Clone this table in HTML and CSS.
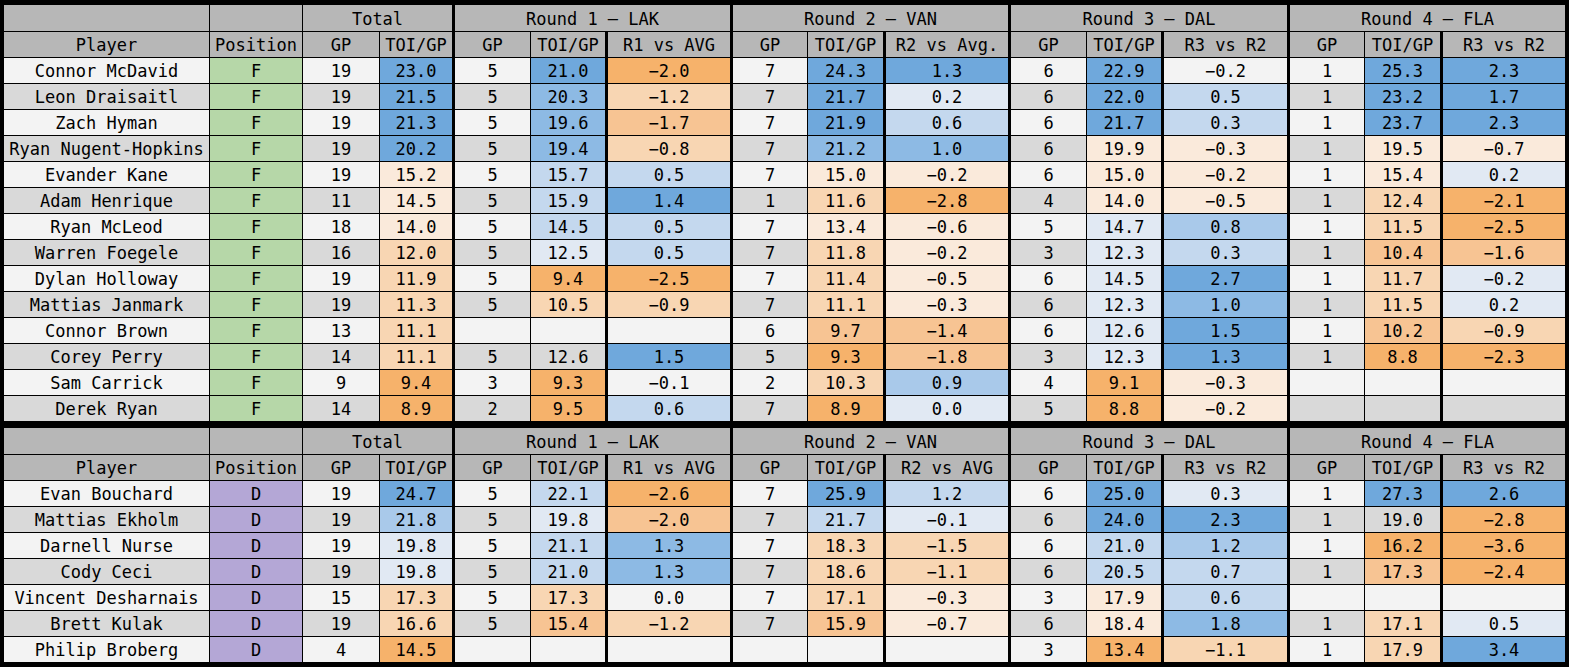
FILE: index.html
```html
<!DOCTYPE html>
<html>
<head>
<meta charset="utf-8">
<title>Oilers TOI by round</title>
<link rel="stylesheet" href="styles.css">
</head>
<body>
<div class="sheet">
  <section class="block fwd">
    <div class="row head1"><div></div><div></div><div class="s2 gr">Total</div><div class="s3 gr">Round 1 – LAK</div><div class="s3 gr">Round 2 – VAN</div><div class="s3 gr">Round 3 – DAL</div><div class="s3">Round 4 – FLA</div></div>
    <div class="row head2"><div>Player</div><div>Position</div><div>GP</div><div>TOI/GP</div><div>GP</div><div>TOI/GP</div><div>R1 vs AVG</div><div>GP</div><div>TOI/GP</div><div>R2 vs Avg.</div><div>GP</div><div>TOI/GP</div><div>R3 vs R2</div><div>GP</div><div>TOI/GP</div><div>R3 vs R2</div></div>
    <div class="row dr"><div>Connor McDavid</div><div class="pf">F</div><div>19</div><div class="b4">23.0</div><div>5</div><div class="b4">21.0</div><div class="o3">−2.0</div><div>7</div><div class="b4">24.3</div><div class="b4">1.3</div><div>6</div><div class="b4">22.9</div><div>−0.2</div><div>1</div><div class="b4">25.3</div><div class="b4">2.3</div></div>
    <div class="row dr"><div>Leon Draisaitl</div><div class="pf">F</div><div>19</div><div class="b4">21.5</div><div>5</div><div class="b3">20.3</div><div class="o1">−1.2</div><div>7</div><div class="b4">21.7</div><div class="b0">0.2</div><div>6</div><div class="b4">22.0</div><div class="b1">0.5</div><div>1</div><div class="b4">23.2</div><div class="b4">1.7</div></div>
    <div class="row dr"><div>Zach Hyman</div><div class="pf">F</div><div>19</div><div class="b4">21.3</div><div>5</div><div class="b3">19.6</div><div class="o2">−1.7</div><div>7</div><div class="b4">21.9</div><div class="b1">0.6</div><div>6</div><div class="b4">21.7</div><div class="b1">0.3</div><div>1</div><div class="b4">23.7</div><div class="b4">2.3</div></div>
    <div class="row dr"><div>Ryan Nugent-Hopkins</div><div class="pf">F</div><div>19</div><div class="b4">20.2</div><div>5</div><div class="b3">19.4</div><div class="o1">−0.8</div><div>7</div><div class="b3">21.2</div><div class="b3">1.0</div><div>6</div><div class="o0">19.9</div><div class="o0">−0.3</div><div>1</div><div class="o0">19.5</div><div class="o0">−0.7</div></div>
    <div class="row dr"><div>Evander Kane</div><div class="pf">F</div><div>19</div><div class="o0">15.2</div><div>5</div><div class="b1">15.7</div><div class="b1">0.5</div><div>7</div><div class="o0">15.0</div><div class="o0">−0.2</div><div>6</div><div class="o0">15.0</div><div class="o0">−0.2</div><div>1</div><div class="o0">15.4</div><div class="b0">0.2</div></div>
    <div class="row dr"><div>Adam Henrique</div><div class="pf">F</div><div>11</div><div class="o0">14.5</div><div>5</div><div class="b1">15.9</div><div class="b4">1.4</div><div>1</div><div class="o1">11.6</div><div class="o3">−2.8</div><div>4</div><div class="o0">14.0</div><div class="o0">−0.5</div><div>1</div><div class="o1">12.4</div><div class="o3">−2.1</div></div>
    <div class="row dr"><div>Ryan McLeod</div><div class="pf">F</div><div>18</div><div class="o0">14.0</div><div>5</div><div class="b1">14.5</div><div class="b1">0.5</div><div>7</div><div class="o0">13.4</div><div class="o0">−0.6</div><div>5</div><div class="b0">14.7</div><div class="b2">0.8</div><div>1</div><div class="o1">11.5</div><div class="o3">−2.5</div></div>
    <div class="row dr"><div>Warren Foegele</div><div class="pf">F</div><div>16</div><div class="o1">12.0</div><div>5</div><div class="b0">12.5</div><div class="b1">0.5</div><div>7</div><div class="o1">11.8</div><div class="o0">−0.2</div><div>3</div><div class="b0">12.3</div><div class="b1">0.3</div><div>1</div><div class="o2">10.4</div><div class="o2">−1.6</div></div>
    <div class="row dr"><div>Dylan Holloway</div><div class="pf">F</div><div>19</div><div class="o1">11.9</div><div>5</div><div class="o3">9.4</div><div class="o3">−2.5</div><div>7</div><div class="o1">11.4</div><div class="o0">−0.5</div><div>6</div><div class="b0">14.5</div><div class="b4">2.7</div><div>1</div><div class="o1">11.7</div><div class="b0">−0.2</div></div>
    <div class="row dr"><div>Mattias Janmark</div><div class="pf">F</div><div>19</div><div class="o1">11.3</div><div>5</div><div class="o1">10.5</div><div class="o1">−0.9</div><div>7</div><div class="o1">11.1</div><div class="o0">−0.3</div><div>6</div><div class="b0">12.3</div><div class="b3">1.0</div><div>1</div><div class="o1">11.5</div><div class="b0">0.2</div></div>
    <div class="row dr"><div>Connor Brown</div><div class="pf">F</div><div>13</div><div class="o1">11.1</div><div></div><div></div><div></div><div>6</div><div class="o2">9.7</div><div class="o2">−1.4</div><div>6</div><div class="b0">12.6</div><div class="b4">1.5</div><div>1</div><div class="o2">10.2</div><div class="o1">−0.9</div></div>
    <div class="row dr"><div>Corey Perry</div><div class="pf">F</div><div>14</div><div class="o1">11.1</div><div>5</div><div>12.6</div><div class="b4">1.5</div><div>5</div><div class="o3">9.3</div><div class="o2">−1.8</div><div>3</div><div class="b0">12.3</div><div class="b4">1.3</div><div>1</div><div class="o3">8.8</div><div class="o3">−2.3</div></div>
    <div class="row dr"><div>Sam Carrick</div><div class="pf">F</div><div>9</div><div class="o3">9.4</div><div>3</div><div class="o3">9.3</div><div>−0.1</div><div>2</div><div class="o1">10.3</div><div class="b2">0.9</div><div>4</div><div class="o3">9.1</div><div class="o0">−0.3</div><div></div><div></div><div></div></div>
    <div class="row dr"><div>Derek Ryan</div><div class="pf">F</div><div>14</div><div class="o3">8.9</div><div>2</div><div class="o3">9.5</div><div class="b1">0.6</div><div>7</div><div class="o3">8.9</div><div class="b0">0.0</div><div>5</div><div class="o3">8.8</div><div class="o0">−0.2</div><div></div><div></div><div></div></div>
  </section>
  <section class="block def">
    <div class="row head1"><div></div><div></div><div class="s2 gr">Total</div><div class="s3 gr">Round 1 – LAK</div><div class="s3 gr">Round 2 – VAN</div><div class="s3 gr">Round 3 – DAL</div><div class="s3">Round 4 – FLA</div></div>
    <div class="row head2"><div>Player</div><div>Position</div><div>GP</div><div>TOI/GP</div><div>GP</div><div>TOI/GP</div><div>R1 vs AVG</div><div>GP</div><div>TOI/GP</div><div>R2 vs AVG</div><div>GP</div><div>TOI/GP</div><div>R3 vs R2</div><div>GP</div><div>TOI/GP</div><div>R3 vs R2</div></div>
    <div class="row dr"><div>Evan Bouchard</div><div class="pd">D</div><div>19</div><div class="b4">24.7</div><div>5</div><div class="b1">22.1</div><div class="o3">−2.6</div><div>7</div><div class="b4">25.9</div><div class="b1">1.2</div><div>6</div><div class="b4">25.0</div><div class="b0">0.3</div><div>1</div><div class="b4">27.3</div><div class="b4">2.6</div></div>
    <div class="row dr"><div>Mattias Ekholm</div><div class="pd">D</div><div>19</div><div class="b2">21.8</div><div>5</div><div class="b0">19.8</div><div class="o2">−2.0</div><div>7</div><div class="b1">21.7</div><div class="b0">−0.1</div><div>6</div><div class="b4">24.0</div><div class="b4">2.3</div><div>1</div><div>19.0</div><div class="o3">−2.8</div></div>
    <div class="row dr"><div>Darnell Nurse</div><div class="pd">D</div><div>19</div><div class="b0">19.8</div><div>5</div><div class="b1">21.1</div><div class="b3">1.3</div><div>7</div><div class="o1">18.3</div><div class="o1">−1.5</div><div>6</div><div class="b1">21.0</div><div class="b2">1.2</div><div>1</div><div class="o3">16.2</div><div class="o3">−3.6</div></div>
    <div class="row dr"><div>Cody Ceci</div><div class="pd">D</div><div>19</div><div class="b0">19.8</div><div>5</div><div class="b1">21.0</div><div class="b3">1.3</div><div>7</div><div class="o1">18.6</div><div class="o1">−1.1</div><div>6</div><div class="b1">20.5</div><div class="b1">0.7</div><div>1</div><div class="o2">17.3</div><div class="o3">−2.4</div></div>
    <div class="row dr"><div>Vincent Desharnais</div><div class="pd">D</div><div>15</div><div class="o1">17.3</div><div>5</div><div class="o1">17.3</div><div>0.0</div><div>7</div><div class="o1">17.1</div><div class="o0">−0.3</div><div>3</div><div class="o0">17.9</div><div class="b1">0.6</div><div></div><div></div><div></div></div>
    <div class="row dr"><div>Brett Kulak</div><div class="pd">D</div><div>19</div><div class="o1">16.6</div><div>5</div><div class="o2">15.4</div><div class="o1">−1.2</div><div>7</div><div class="o2">15.9</div><div class="o0">−0.7</div><div>6</div><div class="o0">18.4</div><div class="b3">1.8</div><div>1</div><div class="o1">17.1</div><div class="b0">0.5</div></div>
    <div class="row dr"><div>Philip Broberg</div><div class="pd">D</div><div>4</div><div class="o3">14.5</div><div></div><div></div><div></div><div></div><div></div><div></div><div>3</div><div class="o3">13.4</div><div class="o1">−1.1</div><div>1</div><div class="o1">17.9</div><div class="b4">3.4</div></div>
  </section>
</div>
</body>
</html>
```

FILE: styles.css
```css
* { box-sizing: border-box; }
html, body { margin: 0; padding: 0; background: #ffffff; }
body {
  font-family: "DejaVu Sans Mono", "Liberation Mono", monospace;
  font-size: 17px;
  color: #000;
}
.sheet {
  width: 1569px;
  height: 667px;
  border: 4px solid #000;
  border-top-width: 5px;
  background: #000;
}
.block.fwd { border-bottom: 6px solid #000; }
.row {
  display: grid;
  grid-template-columns: 206px 93px 77px 75px 76px 77px 125px 75px 78px 125px 76px 77px 126px 75px 78px 122px;
  height: 26px;
}
.row > div {
  display: flex;
  align-items: center;
  justify-content: center;
  border-right: 1px solid #000;
  border-bottom: 1px solid #000;
  white-space: nowrap;
  overflow: hidden;
  color: #000;
}
.row > div:nth-child(4),
.row > div:nth-child(6),
.row > div:nth-child(7),
.row > div:nth-child(9),
.row > div:nth-child(10),
.row > div:nth-child(12),
.row > div:nth-child(13),
.row > div:nth-child(15) { border-right-width: 3px; }
.row > div:last-child { border-right: 0; }

.head1 { height: 27px; }
.head1 > div { padding-top: 2px; }
.head1 > div, .head2 > div { background: #b7b7b7; }
.head1 > div.s2 { grid-column: span 2; }
.head1 > div.s3 { grid-column: span 3; }
.head1 > div:nth-child(2) { border-right-width: 1px; }
.head1 > div.gr { border-right-width: 3px; }
.head1 > div:last-child { border-right: 0; }

.dr > div { background: #f3f3f3; }
.dr:nth-child(even) > div { background: #d9d9d9; }

.dr > div.pf { background: #b6d7a8; }
.dr > div.pd { background: #b4a7d6; }

.dr > div.b4 { background: #6fa8dc; }
.dr > div.b3 { background: #8dbae4; }
.dr > div.b2 { background: #a9c9ea; }
.dr > div.b1 { background: #c4d8ee; }
.dr > div.b0 { background: #e1e9f3; }
.dr > div.o0 { background: #faeadb; }
.dr > div.o1 { background: #f8d6b3; }
.dr > div.o2 { background: #f7c493; }
.dr > div.o3 { background: #f6b26b; }
```
